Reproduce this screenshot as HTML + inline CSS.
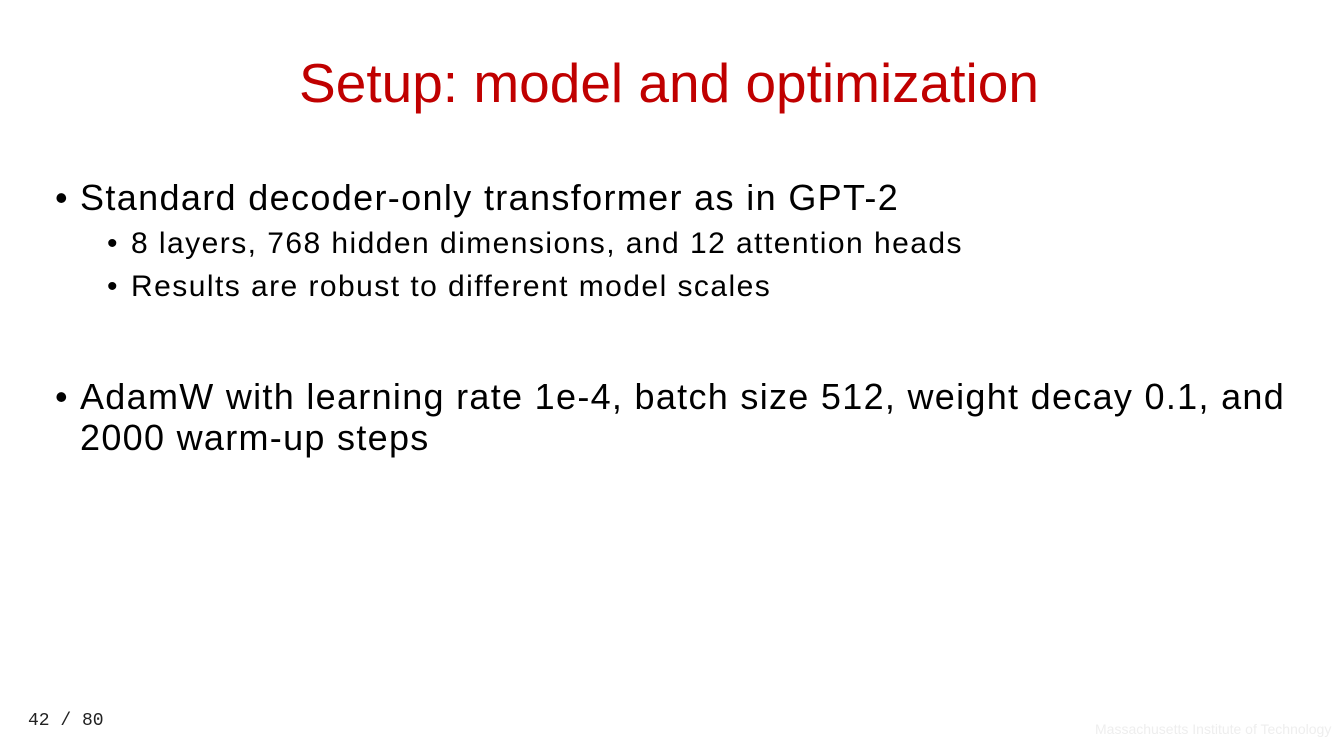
<!DOCTYPE html>
<html><head><meta charset="utf-8"><style>
body{margin:0;width:1334px;height:750px;background:#fff;position:relative;overflow:hidden;font-family:"Liberation Sans",Arial,sans-serif;color:#000}
.a{position:absolute;white-space:nowrap;line-height:1}
.t{color:#c00000;font-size:55px;left:0;width:1338px;text-align:center;top:56px}
.m{font-size:36px;letter-spacing:1.35px}
.s{font-size:30px;letter-spacing:1.45px}
</style></head><body>
<div class="a t">Setup: model and optimization</div>
<div class="a m" style="left:55px;top:180px">•</div>
<div class="a m" style="left:80px;top:180px">Standard decoder-only transformer as in GPT-2</div>
<div class="a s" style="left:107px;top:229px">•</div>
<div class="a s" style="left:131px;top:229px">8 layers, 768 hidden dimensions, and 12 attention heads</div>
<div class="a s" style="left:107px;top:272px">•</div>
<div class="a s" style="left:131px;top:272px">Results are robust to different model scales</div>
<div class="a m" style="left:55px;top:379px">•</div>
<div class="a m" style="left:80px;line-height:41px;top:376px;letter-spacing:1.3px">AdamW with learning rate 1e-4, batch size 512, weight decay 0.1, and<br>2000 warm-up steps</div>
<div class="a" style="left:28px;top:712px;font-size:18px;font-family:'Liberation Mono',monospace;color:#222">42 / 80</div>
<div class="a" style="left:1095px;top:722px;font-size:14px;color:#eee">Massachusetts Institute of Technology</div>
</body></html>
